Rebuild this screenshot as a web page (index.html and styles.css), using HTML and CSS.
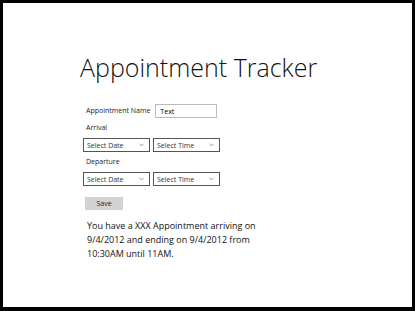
FILE: index.html
```html
<!DOCTYPE html>
<html lang="en">
<head>
  <meta charset="UTF-8">
  <title>Appointment Tracker</title>
  <link rel="stylesheet" href="styles.css">
</head>
<body>
  <div class="frame">
    <h1 class="title">Appointment Tracker</h1>
    <div class="form">
      <div class="name-row">
        <label class="label">Appointment Name</label>
        <input class="text-input" type="text" value="Text">
      </div>
      <div class="label">Arrival</div>
      <div class="select-row">
        <div class="select">Select Date<svg class="caret" viewBox="0 0 6 4"><path d="M0.5 0.5 L3 3 L5.5 0.5" /></svg></div>
        <div class="select">Select Time<svg class="caret" viewBox="0 0 6 4"><path d="M0.5 0.5 L3 3 L5.5 0.5" /></svg></div>
      </div>
      <div class="label">Departure</div>
      <div class="select-row">
        <div class="select">Select Date<svg class="caret" viewBox="0 0 6 4"><path d="M0.5 0.5 L3 3 L5.5 0.5" /></svg></div>
        <div class="select">Select Time<svg class="caret" viewBox="0 0 6 4"><path d="M0.5 0.5 L3 3 L5.5 0.5" /></svg></div>
      </div>
      <button class="save">Save</button>
      <p class="summary">You have a XXX Appointment arriving on 9/4/2012 and ending on 9/4/2012 from 10:30AM until 11AM.</p>
    </div>
  </div>
</body>
</html>
```

FILE: styles.css
```css
html, body {
  margin: 0;
  height: 100%;
}
body {
  background: #000;
  font-family: "Open Sans", "Liberation Sans", sans-serif;
  color: #111;
}
.frame {
  box-sizing: border-box;
  margin: 3px 3px 4px 3px;
  height: calc(100% - 7px);
  background: #fff;
  padding: 46px 0 0 77px;
}
.title {
  margin: 0;
  font-weight: 300;
  font-size: 25px;
  line-height: 36px;
  color: #111;
}
.form {
  margin: 19px 0 0 3px;
  width: 240px;
}
.name-row {
  display: flex;
  align-items: center;
  gap: 5px;
}
.label {
  font-size: 7px;
  line-height: 10px;
  color: #222;
  display: block;
  margin: 5px 0 5px 3px;
}
.name-row .label {
  margin: 0 0 0 3px;
}
.text-input {
  box-sizing: border-box;
  width: 62px;
  height: 14px;
  border: 1px solid #bbb;
  font: 7px "Open Sans", sans-serif;
  padding: 0 4px;
  margin: 0;
}
.select-row {
  display: flex;
  gap: 3px;
}
.select {
  box-sizing: border-box;
  width: 67px;
  height: 14px;
  border: 1.5px solid #555;
  font-size: 7px;
  color: #333;
  padding: 0 5px 0 3px;
  display: flex;
  align-items: center;
  justify-content: space-between;
}
.caret {
  width: 5px;
  height: 4px;
  fill: none;
  stroke: #666;
  stroke-width: 0.8;
}
.save {
  display: block;
  margin: 11px 0 0 2px;
  width: 38px;
  height: 13px;
  border: none;
  background: #d3d3d3;
  font: 7px "Open Sans", sans-serif;
  color: #222;
  padding: 0;
}
.summary {
  margin: 9px 0 0 4px;
  font-size: 9px;
  line-height: 14px;
  width: 180px;
}
```
